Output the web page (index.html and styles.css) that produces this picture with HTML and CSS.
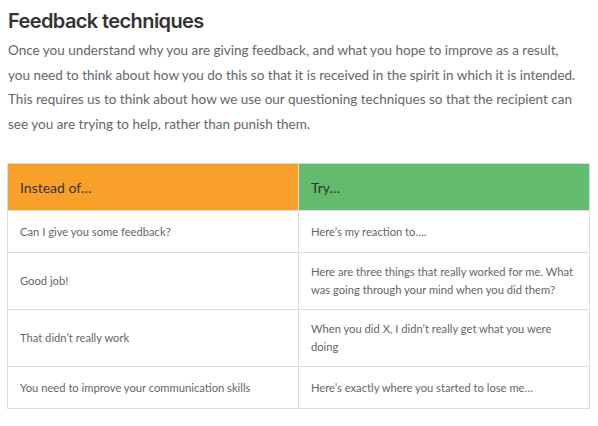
FILE: index.html
```html
<!DOCTYPE html>
<html lang="en">
<head>
<meta charset="utf-8">
<title>Feedback techniques</title>
<link rel="stylesheet" href="styles.css">
</head>
<body>
<main class="page">
  <h2 class="title">Feedback techniques</h2>
  <p class="intro">Once you understand why you are giving feedback, and what you hope to improve as a result, you need to think about how you do this so that it is received in the spirit in which it is intended. This requires us to think about how we use our questioning techniques so that the recipient can see you are trying to help, rather than punish them.</p>
  <table class="compare">
    <thead>
      <tr>
        <th class="col-instead">Instead of…</th>
        <th class="col-try">Try…</th>
      </tr>
    </thead>
    <tbody>
      <tr class="row-short">
        <td>Can I give you some feedback?</td>
        <td>Here’s my reaction to….</td>
      </tr>
      <tr class="row-tall">
        <td>Good job!</td>
        <td>Here are three things that really worked for me. What was going through your mind when you did them?</td>
      </tr>
      <tr class="row-tall">
        <td>That didn’t really work</td>
        <td>When you did X, I didn’t really get what you were doing</td>
      </tr>
      <tr class="row-short">
        <td>You need to improve your communication skills</td>
        <td>Here’s exactly where you started to lose me…</td>
      </tr>
    </tbody>
  </table>
</main>
</body>
</html>
```

FILE: styles.css
```css
html, body {
  margin: 0;
  padding: 0;
  background: #ffffff;
}

.page {
  padding: 9px 8px 0 8px;
  font-family: "Lato", "Open Sans", sans-serif;
}

.title {
  margin: 0;
  font-family: "Inter", "Noto Sans", sans-serif;
  font-weight: 600;
  font-size: 20px;
  line-height: 24px;
  color: #333333;
  letter-spacing: -0.6px;
}

.intro {
  margin: 5px 0 0 0;
  max-width: 571px;
  font-size: 13.5px;
  line-height: 24.5px;
  color: #666666;
}

.compare {
  margin: 27px 0 0 -1px;
  width: 583px;
  border-collapse: collapse;
  table-layout: fixed;
  border: 1px solid #dddddd;
}

.compare th,
.compare td {
  border: 1px solid #dddddd;
  padding: 0 12px;
  text-align: left;
  vertical-align: middle;
}

.compare th {
  height: 46px;
  font-weight: 400;
  font-size: 14px;
  color: #333333;
}

.col-instead {
  background: #f9a02a;
}

.col-try {
  background: #62bb6e;
}

.compare td {
  font-size: 11.2px;
  line-height: 18px;
  color: #666666;
}

.row-short td {
  height: 41px;
}

.row-tall td {
  height: 56px;
}
```
